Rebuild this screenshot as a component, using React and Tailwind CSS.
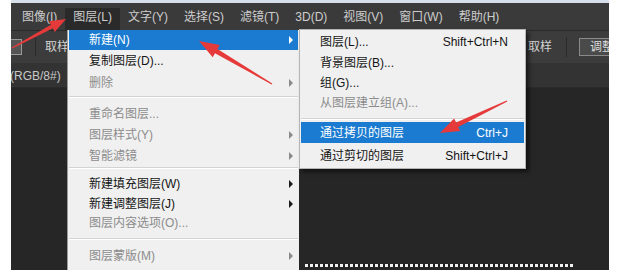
import React from 'react';

// Photoshop "图层 > 新建" menu, open over the dark workspace
const menuBar = ['图像(I)', '图层(L)', '文字(Y)', '选择(S)', '滤镜(T)', '3D(D)', '视图(V)', '窗口(W)', '帮助(H)'];

const mainItems = [
    { label: '新建(N)', arrow: true, active: true, h: 'h-[20px]' },
    { label: '复制图层(D)...', h: 'h-[22px]' },
    { label: '删除', disabled: true, arrow: true, h: 'h-[22px]' },
    { sep: true, h: 'h-[9px] pt-[2px]' },
    { label: '重命名图层...', disabled: true, h: 'h-[21px]' },
    { label: '图层样式(Y)', disabled: true, arrow: true, h: 'h-[21px]' },
    { label: '智能滤镜', disabled: true, arrow: true, h: 'h-[21px]' },
    { sep: true, h: 'h-[8px] pt-[1px]' },
    { label: '新建填充图层(W)', arrow: true, h: 'h-[20px]' },
    { label: '新建调整图层(J)', arrow: true, h: 'h-[19px]' },
    { label: '图层内容选项(O)...', disabled: true, h: 'h-[19px]' },
    { sep: true, h: 'h-[14px] pt-[6px]' },
    { label: '图层蒙版(M)', disabled: true, arrow: true, h: 'h-[20px]' },
];

const subItems = [
    { label: '图层(L)...', key: 'Shift+Ctrl+N', h: 'h-[20px]' },
    { label: '背景图层(B)...', h: 'h-[21px]' },
    { label: '组(G)...', h: 'h-[20px]' },
    { label: '从图层建立组(A)...', disabled: true, h: 'h-[20px]' },
    { sep: true, h: 'h-[9px] pt-[5px]' },
    { label: '通过拷贝的图层', key: 'Ctrl+J', active: true, h: 'h-[21px]' },
    { label: '通过剪切的图层', key: 'Shift+Ctrl+J', h: 'h-[25px]' },
];

const Separator = ({ h }) => (
    <div className={`${h} px-[1px]`}>
        <div className="h-px bg-[#d3d3d3]" />
        <div className="h-px bg-white" />
    </div>
);

const SubArrow = ({ active, disabled }) => (
    <span
        className={`ml-auto mr-[5px] w-0 h-0 border-y-[4px] border-y-transparent border-l-[4px] ${
            active ? 'border-l-white' : disabled ? 'border-l-[#8a8a8a]' : 'border-l-[#1a1a1a]'
        }`}
    />
);

// tapered red annotation arrow, tail -> tip
const arrowPoints = (x1, y1, x2, y2, headLen, headW, shaftW) => {
    const len = Math.hypot(x2 - x1, y2 - y1);
    const dx = (x2 - x1) / len;
    const dy = (y2 - y1) / len;
    const nx = -dy;
    const ny = dx;
    const bx = x2 - dx * headLen;
    const by = y2 - dy * headLen;
    const pts = [
        [x1 + nx * 0.6, y1 + ny * 0.6],
        [bx + nx * shaftW / 2, by + ny * shaftW / 2],
        [bx + nx * headW / 2, by + ny * headW / 2],
        [x2, y2],
        [bx - nx * headW / 2, by - ny * headW / 2],
        [bx - nx * shaftW / 2, by - ny * shaftW / 2],
        [x1 - nx * 0.6, y1 - ny * 0.6],
    ];
    return pts.map(p => p.map(v => v.toFixed(1)).join(',')).join(' ');
};

const App = () => {
    return (
        <div className="relative w-[618px] h-[270px] overflow-hidden bg-white font-['Liberation_Sans','Noto_Sans_CJK_SC',sans-serif] text-[12px] leading-none">
            <div className="flex h-full">
                <div className="w-[11px] shrink-0 bg-white" />

                <div className="flex-1 flex flex-col overflow-hidden bg-[#262626]">
                    <div className="h-[3px] shrink-0 bg-[#d7e0ea]" />

                    {/* menu bar */}
                    <div className="h-[27px] shrink-0 flex items-end pl-[3px] bg-[#3a3a3a] text-[#cdcdcd]">
                        {menuBar.map(m => (
                            <div
                                key={m}
                                className={`h-[22px] px-2 flex items-center whitespace-nowrap ${m === '图层(L)' ? 'bg-[#2a2a2a]' : ''}`}
                            >
                                <span className="-mt-[4px]">{m}</span>
                            </div>
                        ))}
                    </div>

                    {/* options bar */}
                    <div className="h-[33px] shrink-0 flex items-center bg-[#3c3c3c] border-t border-[#2b2b2b] text-[#d2d2d2]">
                        <div className="w-[11px] h-[16px] shrink-0 border border-l-0 border-[#9a9a9a] bg-[#555555]" />
                        <div className="ml-[13px] w-px h-[18px] bg-[#2a2a2a]" />
                        <span className="ml-[9px] whitespace-nowrap">取样</span>
                        <div className="ml-auto mr-[-14px] flex items-center">
                            <span className="whitespace-nowrap">取样</span>
                            <div className="ml-[14px] w-px h-[20px] bg-[#2a2a2a]" />
                            <div className="ml-[12px] w-[44px] h-[18px] shrink-0 overflow-hidden flex items-center pl-[10px] border border-[#8a8a8a] bg-[#4a4a4a] text-[#dcdcdc] whitespace-nowrap">
                                调整
                            </div>
                        </div>
                    </div>

                    {/* document tab */}
                    <div className="h-[25px] shrink-0 flex items-center bg-[#333333] border-b border-[#2a2a2a] text-[#c8c8c8]">
                        <span className="-ml-[1px] mt-[2px] whitespace-nowrap">(RGB/8#)</span>
                    </div>

                    {/* canvas */}
                    <div className="flex-1">
                        <div className="mt-[176px] ml-[294px] w-[268px] h-[3px] bg-[repeating-linear-gradient(90deg,#f2f2f2_0px,#f2f2f2_3px,#1e1e1e_3px,#1e1e1e_5px)]" />
                    </div>
                </div>

                <div className="w-[9px] shrink-0 bg-white" />
            </div>

            {/* 图层 dropdown */}
            <div className="absolute left-[67px] top-[30px] w-[232px] h-[250px] bg-[#f0f0f0] border-l border-[#9a9a9a]">
                {mainItems.map((it, i) =>
                    it.sep ? (
                        <Separator key={i} h={it.h} />
                    ) : (
                        <div
                            key={i}
                            className={`${it.h} mx-[1px] flex items-center pl-[20px] whitespace-nowrap ${
                                it.active ? 'bg-[#1a7bd0] text-white' : it.disabled ? 'text-[#8c8c8c]' : 'text-[#141414]'
                            }`}
                        >
                            <span>{it.label}</span>
                            {it.arrow && <SubArrow active={it.active} disabled={it.disabled} />}
                        </div>
                    )
                )}
            </div>

            {/* 新建 submenu */}
            <div className="absolute left-[299px] top-[29px] w-[227px] pt-[2px] bg-[#f0f0f0] border border-[#b5b5b5] shadow-[3px_3px_4px_rgba(0,0,0,0.55)]">
                {subItems.map((it, i) =>
                    it.sep ? (
                        <Separator key={i} h={it.h} />
                    ) : (
                        <div
                            key={i}
                            className={`${it.h} mx-[1px] flex items-center pl-[19px] pr-[16px] whitespace-nowrap ${
                                it.active ? 'bg-[#1a7bd0] text-white' : it.disabled ? 'text-[#8c8c8c]' : 'text-[#141414]'
                            }`}
                        >
                            <span>{it.label}</span>
                            {it.key && <span className="ml-auto">{it.key}</span>}
                        </div>
                    )
                )}
            </div>

            {/* red annotation arrows */}
            <svg className="absolute inset-0 pointer-events-none" width="618" height="270" viewBox="0 0 618 270">
                <polygon points={arrowPoints(12, 48, 66, 19, 16, 12, 4)} fill="#e63a3a" />
                <polygon points={arrowPoints(272, 84, 199, 41, 20, 14, 5)} fill="#e63a3a" />
                <polygon points={arrowPoints(507, 101, 440, 133, 19, 14, 5)} fill="#e63a3a" />
            </svg>
        </div>
    );
};

export default App;
